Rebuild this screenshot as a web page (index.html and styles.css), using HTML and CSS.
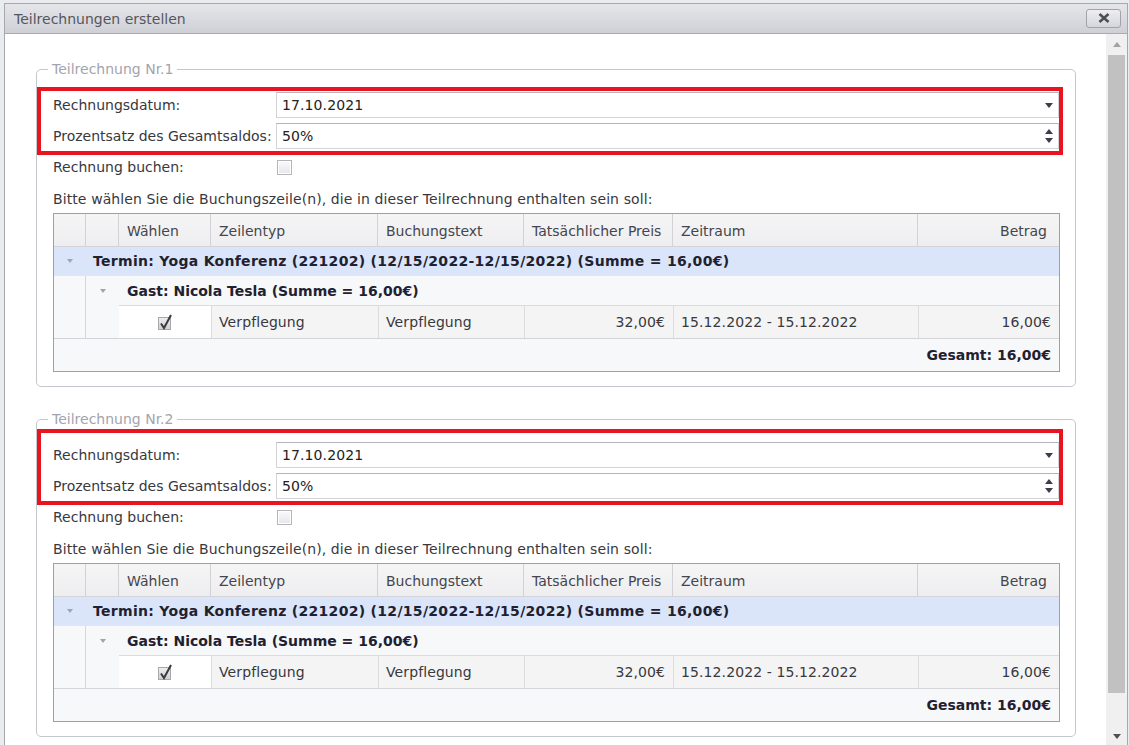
FILE: index.html
```html
<!DOCTYPE html>
<html lang="de">
<head>
<meta charset="utf-8">
<title>Teilrechnungen erstellen</title>
<link rel="stylesheet" href="styles.css">
</head>
<body>
<div class="dialog">
  <div class="titlebar">
    <span class="title">Teilrechnungen erstellen</span>
    <button class="close" type="button" aria-label="Schließen">
      <svg width="12" height="10" viewBox="0 0 12 10"><path d="M1.5 1 L10.5 9 M10.5 1 L1.5 9" stroke="#4e4e56" stroke-width="2.6" stroke-linecap="butt" fill="none"/></svg>
    </button>
  </div>
  <div class="body">
    <div class="content">

      <fieldset class="part">
        <legend>Teilrechnung Nr.1</legend>
        <div class="mark">
          <div class="frow">
            <span class="flabel">Rechnungsdatum:</span>
            <div class="input"><span class="val">17.10.2021</span><span class="trig"><span class="tri-down"></span></span></div>
          </div>
          <div class="frow">
            <span class="flabel">Prozentsatz des Gesamtsaldos:</span>
            <div class="input"><span class="val">50%</span><span class="trig spin"><span class="tri-up"></span><span class="tri-down"></span></span></div>
          </div>
        </div>
        <div class="crow">
          <span class="flabel">Rechnung buchen:</span>
          <span class="cbox"></span>
        </div>
        <div class="hint">Bitte wählen Sie die Buchungszeile(n), die in dieser Teilrechnung enthalten sein soll:</div>
        <div class="grid">
          <div class="row head">
            <div class="c"></div><div class="c"></div><div class="c">Wählen</div><div class="c">Zeilentyp</div><div class="c">Buchungstext</div><div class="c">Tatsächlicher Preis</div><div class="c">Zeitraum</div><div class="c r last">Betrag</div>
          </div>
          <div class="row g1">
            <div class="c ctr"><span class="gtri"></span></div>
            <div class="c span7 gtext">Termin: Yoga Konferenz (221202) (12/15/2022-12/15/2022) (Summe = 16,00€)</div>
          </div>
          <div class="row g2">
            <div class="c ind"></div>
            <div class="c ctr"><span class="gtri"></span></div>
            <div class="c span6 gtext">Gast: Nicola Tesla (Summe = 16,00€)</div>
          </div>
          <div class="row data">
            <div class="c ind"></div>
            <div class="c ind2"></div>
            <div class="c chk"><svg width="18" height="18" viewBox="0 0 18 18"><defs><linearGradient id="cb1" x1="0" y1="0" x2="0" y2="1"><stop offset="0" stop-color="#eeeeee"/><stop offset="1" stop-color="#cfcfcf"/></linearGradient></defs><rect x="2.5" y="4.5" width="12" height="12" fill="url(#cb1)" stroke="#a7a7ad"/><path d="M5 10.5 L8 15 L15 2" stroke="#3a3a40" stroke-width="2" fill="none"/></svg></div>
            <div class="c cell">Verpflegung</div>
            <div class="c cell">Verpflegung</div>
            <div class="c cell r">32,00€</div>
            <div class="c cell">15.12.2022 - 15.12.2022</div>
            <div class="c cell r last">16,00€</div>
          </div>
          <div class="row sum">
            <div class="c r">Gesamt: 16,00€</div>
          </div>
        </div>
      </fieldset>

      <fieldset class="part second">
        <legend>Teilrechnung Nr.2</legend>
        <div class="mark mark-tall">
          <div class="frow">
            <span class="flabel">Rechnungsdatum:</span>
            <div class="input"><span class="val">17.10.2021</span><span class="trig"><span class="tri-down"></span></span></div>
          </div>
          <div class="frow">
            <span class="flabel">Prozentsatz des Gesamtsaldos:</span>
            <div class="input"><span class="val">50%</span><span class="trig spin"><span class="tri-up"></span><span class="tri-down"></span></span></div>
          </div>
        </div>
        <div class="crow">
          <span class="flabel">Rechnung buchen:</span>
          <span class="cbox"></span>
        </div>
        <div class="hint">Bitte wählen Sie die Buchungszeile(n), die in dieser Teilrechnung enthalten sein soll:</div>
        <div class="grid">
          <div class="row head">
            <div class="c"></div><div class="c"></div><div class="c">Wählen</div><div class="c">Zeilentyp</div><div class="c">Buchungstext</div><div class="c">Tatsächlicher Preis</div><div class="c">Zeitraum</div><div class="c r last">Betrag</div>
          </div>
          <div class="row g1">
            <div class="c ctr"><span class="gtri"></span></div>
            <div class="c span7 gtext">Termin: Yoga Konferenz (221202) (12/15/2022-12/15/2022) (Summe = 16,00€)</div>
          </div>
          <div class="row g2">
            <div class="c ind"></div>
            <div class="c ctr"><span class="gtri"></span></div>
            <div class="c span6 gtext">Gast: Nicola Tesla (Summe = 16,00€)</div>
          </div>
          <div class="row data">
            <div class="c ind"></div>
            <div class="c ind2"></div>
            <div class="c chk"><svg width="18" height="18" viewBox="0 0 18 18"><defs><linearGradient id="cb2" x1="0" y1="0" x2="0" y2="1"><stop offset="0" stop-color="#eeeeee"/><stop offset="1" stop-color="#cfcfcf"/></linearGradient></defs><rect x="2.5" y="4.5" width="12" height="12" fill="url(#cb2)" stroke="#a7a7ad"/><path d="M5 10.5 L8 15 L15 2" stroke="#3a3a40" stroke-width="2" fill="none"/></svg></div>
            <div class="c cell">Verpflegung</div>
            <div class="c cell">Verpflegung</div>
            <div class="c cell r">32,00€</div>
            <div class="c cell">15.12.2022 - 15.12.2022</div>
            <div class="c cell r last">16,00€</div>
          </div>
          <div class="row sum">
            <div class="c r">Gesamt: 16,00€</div>
          </div>
        </div>
      </fieldset>

    </div>
    <div class="scrollbar">
      <div class="sb-btn"><span class="sb-up"></span></div>
      <div class="sb-thumb"></div>
      <div class="sb-rest"></div>
      <div class="sb-btn sb-bottom"><span class="sb-down"></span></div>
    </div>
  </div>
</div>
</body>
</html>
```

FILE: styles.css
```css
* { box-sizing: border-box; }

html, body {
  margin: 0;
  height: 100%;
  overflow: hidden;
}

body {
  background: #e9ebee;
  font-family: "DejaVu Sans", Verdana, sans-serif;
  font-size: 14px;
  letter-spacing: 0.1px;
  color: #333338;
}

.dialog {
  margin: 3px 0 0 4px;
  width: 1124px;
  height: 760px;
  border: 1px solid #a6a8b0;
  border-bottom: none;
  background: #fff;
  display: flex;
  flex-direction: column;
}

.titlebar {
  height: 30px;
  flex: none;
  display: flex;
  align-items: center;
  justify-content: space-between;
  padding: 0 6px 0 9px;
  background: linear-gradient(#e5e6ea, #cfd0d6);
  border-bottom: 1px solid #a9aab2;
}

.title {
  color: #55565f;
  font-size: 14px;
  letter-spacing: 0;
}

.close {
  width: 35px;
  height: 19px;
  margin-top: -1px;
  padding: 0;
  border: 1px solid #a2a3aa;
  border-radius: 3px;
  background: linear-gradient(#eeeef1, #d5d6db);
  display: flex;
  align-items: center;
  justify-content: center;
}

.body {
  flex: 1;
  display: flex;
  min-height: 0;
}

.content {
  flex: 1;
  padding: 26px 31px 0 31px;
  overflow: hidden;
}

.part {
  margin: 0;
  border: 1px solid #c6c7cc;
  border-radius: 5px;
  padding: 9px 15px 14px 16px;
}

.part.second {
  margin-top: 23px;
}

.part legend {
  padding: 0 4px;
  margin-left: -5px;
  line-height: 18px;
  color: #a3a4ac;
  font-size: 14px;
  letter-spacing: 0;
}

.mark {
  margin: 0 -3px 0 -16px;
  border: 4px solid #e8141f;
  padding: 1px 0 2px 12px;
}

.mark.mark-tall {
  margin-top: -8px;
  padding-top: 9px;
}

.frow {
  display: flex;
  align-items: center;
  height: 26px;
}

.frow + .frow {
  margin-top: 5px;
}

.flabel {
  width: 223px;
  flex: none;
  color: #38383e;
  letter-spacing: 0;
}

.input {
  flex: 1;
  height: 26px;
  display: flex;
  align-items: center;
  border: 1px solid #d3d3d8;
  border-top-color: #b3b4bc;
  background: #fff;
}

.val {
  flex: 1;
  padding-left: 5px;
  color: #222;
}

.trig {
  width: 18px;
  height: 100%;
  display: flex;
  flex-direction: column;
  align-items: center;
  justify-content: center;
}

.trig.spin {
  gap: 4px;
}

.tri-down {
  width: 0;
  height: 0;
  border-left: 4px solid transparent;
  border-right: 4px solid transparent;
  border-top: 5px solid #3c3d4c;
}

.tri-up {
  width: 0;
  height: 0;
  border-left: 4px solid transparent;
  border-right: 4px solid transparent;
  border-bottom: 5px solid #3c3d4c;
}

.crow {
  display: flex;
  align-items: center;
  height: 20px;
  margin-top: 2px;
}

.cbox {
  width: 15px;
  height: 15px;
  margin-left: 1px;
  border: 1px solid #b4b4ba;
  background: linear-gradient(#fafafa, #e6e6ea);
  box-shadow: inset 0 0 0 1px #fff;
}

.hint {
  height: 20px;
  line-height: 20px;
  margin-top: 12px;
  color: #38383e;
}

.grid {
  margin-top: 4px;
  border: 1px solid #9e9fa8;
  background: #f7f8fa;
}

.row {
  display: grid;
  grid-template-columns: 32px 33px 92px 167px 146px 149px 245px 141px;
}

.c {
  display: flex;
  align-items: center;
  padding: 0 8px;
  white-space: nowrap;
  overflow: hidden;
  min-width: 0;
}

.c.r { justify-content: flex-end; }
.c.ctr { justify-content: center; padding: 0; }

.head {
  height: 33px;
  background: linear-gradient(#f5f5f6, #eeeef0);
  border-bottom: 1px solid #d3d3d8;
  color: #45454c;
}

.head .c {
  border-right: 1px solid #d2d2d6;
  padding: 1px 9px 0 8px;
  letter-spacing: 0;
}

.head .c.last {
  border-right: none;
  padding-right: 12px;
}

.g1 {
  height: 29px;
  background: #dae5f9;
  border-bottom: 1px solid #e3e6ec;
}

.g2 {
  height: 29px;
  background: #f7f8fa;
}

.gtext {
  font-weight: bold;
  color: #1f2130;
  letter-spacing: 0;
}

.g1 .gtext {
  padding-left: 7px;
  letter-spacing: 0.3px;
}

.span7 { grid-column: span 7; }
.span6 { grid-column: span 6; }

.gtri {
  width: 0;
  height: 0;
  border-left: 3.5px solid transparent;
  border-right: 3.5px solid transparent;
  border-top: 4px solid #a3a4ac;
}

.ind {
  border-right: 1px solid #d6d7dc;
}

.data {
  height: 34px;
  border-bottom: 1px solid #d3d3d8;
}

.data .cell,
.data .chk {
  border-top: 1px solid #dcdcdf;
}

.data .cell {
  background: #f4f4f5;
  border-left: 1px solid #dcdcdf;
  color: #38383e;
  padding-left: 7px;
}

.data .chk {
  background: #fff;
  justify-content: center;
  padding: 0;
}

.sum {
  height: 32px;
  grid-template-columns: 1fr;
}

.sum .c {
  font-weight: bold;
  color: #1f2130;
  padding-right: 8px;
  letter-spacing: 0;
}

.scrollbar {
  width: 21px;
  flex: none;
  background: #f0f0f0;
  display: flex;
  flex-direction: column;
  height: 711px;
}

.sb-btn {
  height: 21px;
  flex: none;
  display: flex;
  align-items: center;
  justify-content: center;
}

.sb-thumb {
  height: 638px;
  flex: none;
  margin: 0 2px 0 2px;
  background: #c1c1c1;
}

.sb-rest { flex: 1; }

.sb-bottom {
  height: 18px;
  align-items: center;
}

.sb-up {
  width: 0;
  height: 0;
  border-left: 4.5px solid transparent;
  border-right: 4.5px solid transparent;
  border-bottom: 5px solid #a3a3a3;
}

.sb-down {
  width: 0;
  height: 0;
  border-left: 4.5px solid transparent;
  border-right: 4.5px solid transparent;
  border-top: 5px solid #505050;
}
```
